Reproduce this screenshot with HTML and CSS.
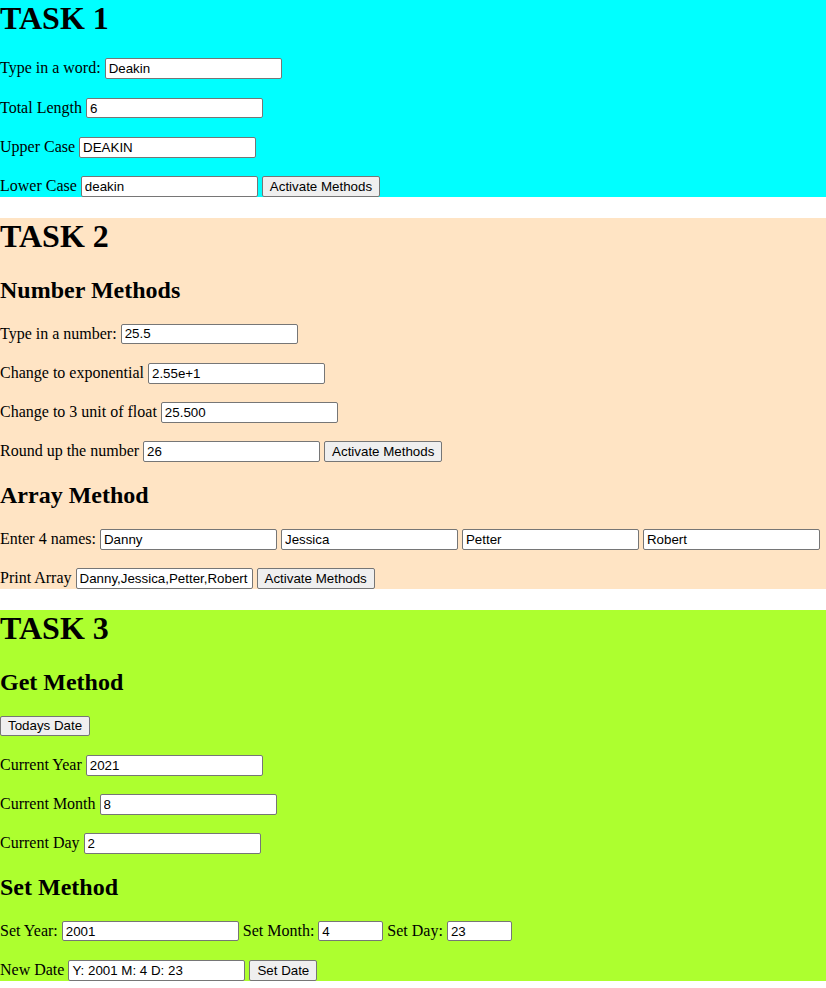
FILE: index.html
```html
<!DOCTYPE html>
<html lang="en">
<head>
<meta charset="utf-8">
<title>Tasks</title>
<link rel="stylesheet" href="styles.css">
</head>
<body>
<section class="task task-one">
  <h1 class="title">TASK 1</h1>
  <div class="row">Type in a word: <input class="field" type="text" value="Deakin"></div>
  <div class="row">Total Length <input class="field" type="text" value="6"></div>
  <div class="row">Upper Case <input class="field" type="text" value="DEAKIN"></div>
  <div class="row">Lower Case <input class="field" type="text" value="deakin"> <button class="btn" type="button">Activate Methods</button></div>
</section>

<section class="task task-two">
  <h1 class="title">TASK 2</h1>
  <h2 class="subtitle">Number Methods</h2>
  <div class="row">Type in a number: <input class="field" type="text" value="25.5"></div>
  <div class="row">Change to exponential <input class="field" type="text" value="2.55e+1"></div>
  <div class="row">Change to 3 unit of float <input class="field" type="text" value="25.500"></div>
  <div class="row">Round up the number <input class="field" type="text" value="26"> <button class="btn" type="button">Activate Methods</button></div>
  <h2 class="subtitle">Array Method</h2>
  <div class="row">Enter 4 names: <input class="field" type="text" value="Danny"> <input class="field" type="text" value="Jessica"> <input class="field" type="text" value="Petter"> <input class="field" type="text" value="Robert"></div>
  <div class="row">Print Array <input class="field" type="text" value="Danny,Jessica,Petter,Robert"> <button class="btn" type="button">Activate Methods</button></div>
</section>

<section class="task task-three">
  <h1 class="title">TASK 3</h1>
  <h2 class="subtitle">Get Method</h2>
  <div class="row"><button class="btn" type="button">Todays Date</button></div>
  <div class="row">Current Year <input class="field" type="text" value="2021"></div>
  <div class="row">Current Month <input class="field" type="text" value="8"></div>
  <div class="row">Current Day <input class="field" type="text" value="2"></div>
  <h2 class="subtitle">Set Method</h2>
  <div class="row">Set Year: <input class="field" type="text" value="2001"> Set Month: <input class="field field-small" type="text" value="4"> Set Day: <input class="field field-small" type="text" value="23"></div>
  <div class="row">New Date <input class="field" type="text" value="Y: 2001 M: 4 D: 23"> <button class="btn" type="button">Set Date</button></div>
</section>
</body>
</html>
```

FILE: styles.css
```css
html, body {
  margin: 0;
  padding: 0;
  background: #ffffff;
}

body {
  font-family: "Liberation Serif", "Times New Roman", serif;
  font-size: 16px;
  color: #000000;
}

.task {
  margin: 0;
}

.task + .task {
  margin-top: 21.44px;
}

.task-one {
  background: #00ffff;
}

.task-two {
  background: #ffe4c4;
}

.task-three {
  background: #adff2f;
}

.title {
  font-size: 32px;
  font-weight: bold;
  margin: 0 0 21.44px;
}

.subtitle {
  font-size: 24px;
  font-weight: bold;
  margin: 19.92px 0;
}

.row {
  margin: 0 0 18.4px;
}

.row:last-child {
  margin-bottom: 0;
}

.field {
  box-sizing: border-box;
  width: 177px;
  height: 20.8px;
  margin: 0;
  padding: 0 3px;
  border: 1px solid #767676;
  border-radius: 2px;
  background: #ffffff;
  color: #000000;
  font-family: "Liberation Sans", Arial, sans-serif;
  font-size: 13.333px;
  vertical-align: baseline;
}

.field-small {
  width: 65px;
}

.btn {
  box-sizing: border-box;
  height: 20.8px;
  margin: 0;
  padding: 0 7px;
  border: 1px solid #767676;
  border-radius: 2px;
  background: #efefef;
  color: #000000;
  font-family: "Liberation Sans", Arial, sans-serif;
  font-size: 13.333px;
  vertical-align: baseline;
}
```
